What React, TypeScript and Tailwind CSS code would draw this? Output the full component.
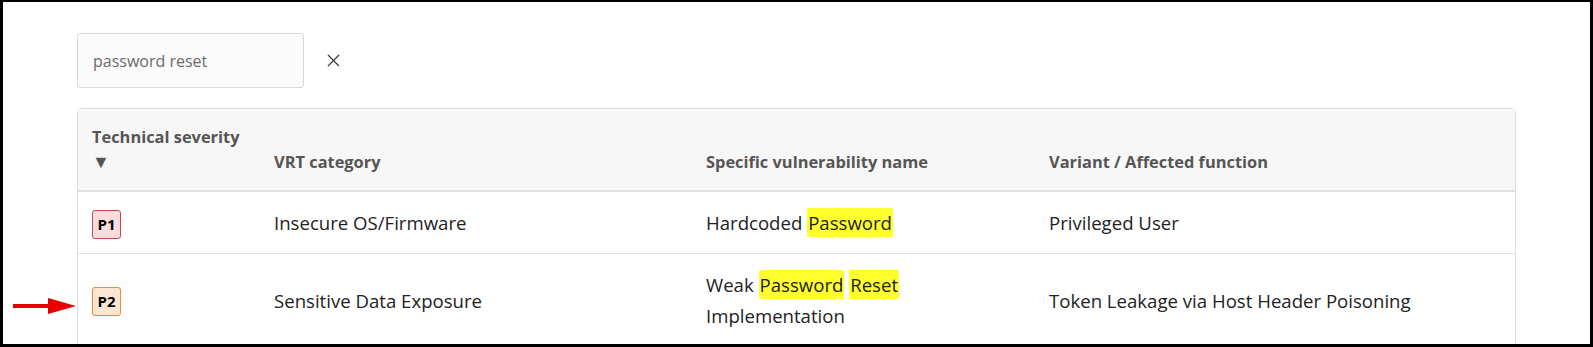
import { X } from "lucide-react";

type Row = {
  severity: "P1" | "P2";
  category: string;
  name: (string | { hl: string })[];
  variant: string;
};

const rows: Row[] = [
  {
    severity: "P1",
    category: "Insecure OS/Firmware",
    name: ["Hardcoded ", { hl: "Password" }],
    variant: "Privileged User",
  },
  {
    severity: "P2",
    category: "Sensitive Data Exposure",
    name: ["Weak ", { hl: "Password" }, " ", { hl: "Reset" }, " Implementation"],
    variant: "Token Leakage via Host Header Poisoning",
  },
];

const grid = "grid grid-cols-[182px_432px_343px_1fr]";

const Badge = ({ level }: { level: "P1" | "P2" }) => (
  <span
    className={
      level === "P1"
        ? "inline-flex h-[29px] w-[29px] items-center justify-center rounded-[3px] border border-[#c9474a] bg-[#fadcdc] text-[15px] font-bold text-black"
        : "inline-flex h-[29px] w-[29px] items-center justify-center rounded-[3px] border border-[#e98a35] bg-[#fde5d3] text-[15px] font-bold text-black"
    }
  >
    {level}
  </span>
);

export default function App() {
  return (
    <div
      className="relative h-[347px] w-[1593px] overflow-hidden border-t-2 border-r-[3px] border-b-[3px] border-l-[3px] border-black bg-white pt-[31px] pl-[74px] pr-[75px] text-[#222]"
      style={{ fontFamily: '"Open Sans", "Noto Sans", sans-serif' }}
    >
      {/* search */}
      <div className="flex items-center gap-[19px]">
        <div className="flex h-[55px] w-[227px] items-center rounded-[3px] border border-[#d9d9d9] bg-[#fbfbfb] px-[15px] text-[16px] text-[#6a6a6a]">
          password reset
        </div>
        <X size={21} strokeWidth={1.3} className="text-[#333]" />
      </div>

      {/* table */}
      <div className="mt-5 w-[1439px] rounded-t-[4px] border border-[#dedede]">
        <div className={`${grid} h-[83px] border-b-2 border-[#e0e0e0] bg-[#f7f7f7] text-[16.4px] font-bold text-[#555] leading-[25px]`}>
          <div className="flex flex-col justify-end pb-[16px] pl-[14px]">
            <span>Technical severity</span>
            <span className="text-[18px]">▼</span>
          </div>
          <div className="flex items-end pb-[16px] pl-[14px]">VRT category</div>
          <div className="flex items-end pb-[16px] pl-[14px]">Specific vulnerability name</div>
          <div className="flex items-end pb-[16px] pl-[14px]">Variant / Affected function</div>
        </div>
        {rows.map((r, i) => (
          <div
            key={r.severity}
            className={`${grid} items-center text-[18.6px] leading-[31px] ${
              i === 0 ? "h-[62px] border-b border-[#e3e3e3]" : "h-[92px]"
            }`}
          >
            <div className="pl-[14px]">
              <Badge level={r.severity} />
            </div>
            <div className="pl-[14px]">{r.category}</div>
            <div className="pl-[14px] pr-[100px]">
              {r.name.map((part, j) =>
                typeof part === "string" ? (
                  <span key={j}>{part}</span>
                ) : (
                  <span key={j} className="rounded-[2px] bg-[#ffff2e] px-[1px] py-[2px]">
                    {part.hl}
                  </span>
                )
              )}
            </div>
            <div className="pl-[14px]">{r.variant}</div>
          </div>
        ))}
      </div>

      {/* red arrow annotation */}
      <svg
        className="absolute left-[7px] top-[294px]"
        width="68"
        height="20"
        viewBox="0 0 68 20"
      >
        <rect x="3" y="8" width="36" height="4" fill="#e60000" />
        <polygon points="38,2 66,10 38,18" fill="#e60000" />
      </svg>
    </div>
  );
}
